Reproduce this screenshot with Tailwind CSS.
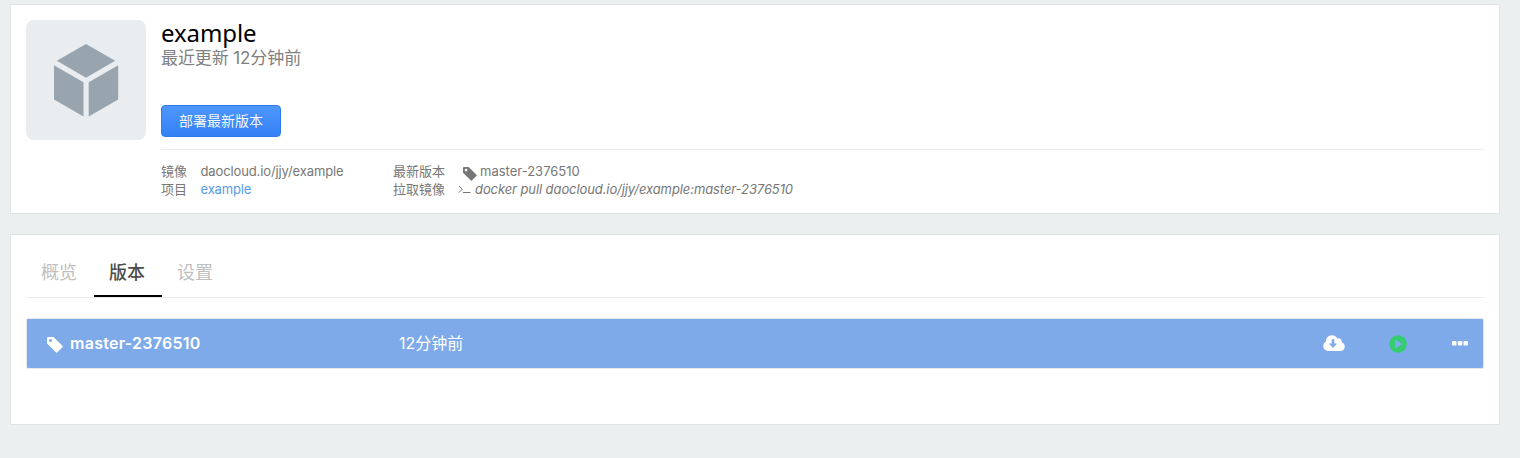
<!DOCTYPE html>
<html lang="zh-CN">
<head>
<meta charset="utf-8">
<title>example</title>
<script src="https://cdn.jsdelivr.net/npm/@tailwindcss/browser@4"></script>
</head>
<body class="h-[458px] overflow-hidden bg-[#ebeff0] pt-1 pl-2.5 font-['Inter','Noto_Sans_CJK_SC',sans-serif] text-[#777]">
  <section class="flex h-[210px] w-[1490px] gap-[15px] border border-[#e1e4e5] bg-white p-[15px]">
    <div class="flex size-[120px] shrink-0 items-center justify-center rounded-lg bg-[#e9edf0]">
      <svg class="h-[73px] w-[65px]" viewBox="0 0 65 73" fill="#99a5ae">
        <path d="M32 0 61.2 16.8 32 33.7 2.8 16.8ZM0 21.2 29.5 38.2V72.5L0 55.5ZM64.2 21.2V55.5L34.7 72.5V38.2Z"/>
      </svg>
    </div>
    <div class="flex min-w-0 flex-1 flex-col">
      <h1 class="h-[27px] font-['Noto_Sans','Open_Sans',sans-serif] text-[24px] leading-[26px] tracking-[-0.1px] whitespace-nowrap text-black">example</h1>
      <p class="h-[22px] text-[17px] leading-[22px] whitespace-nowrap text-[#808080]"><span class="tracking-[-0.1px]">最近更新 12分钟前</span></p>
      <button class="mt-[36px] h-8 w-[120px] rounded border border-[#2f7bea] bg-linear-to-b from-[#4f97ff] to-[#3381f4] text-[14px] leading-[30px] text-white/95">部署最新版本</button>
      <div class="mt-3 border-t border-[#ebebeb] pt-3 text-[13px] leading-[18px] whitespace-nowrap">
        <div class="flex h-[18px]">
          <span class="w-[39px]">镜像</span>
          <span class="w-[193px] pl-[0.5px] tracking-[-0.12px]">daocloud.io/jjy/example</span>
          <span class="w-[70px]">最新版本</span>
          <svg class="mt-[5px] mr-[3px] size-[14px]" viewBox="0 0 16 16" fill="#777"><path fill-rule="evenodd" d="M0 1.2Q0 0 1.2 0H6.5L15.6 9.1Q16 9.5 15.6 9.9L10.1 15.5Q9.6 16 9.1 15.5L0 6.6ZM3.5 2A1.5 1.5 0 1 0 3.5 5 1.5 1.5 0 1 0 3.5 2Z"/></svg>
          <span>master-2376510</span>
        </div>
        <div class="flex h-[18px]">
          <span class="w-[39px]">项目</span>
          <a class="w-[193px] pl-[0.5px] tracking-[-0.15px] text-[#599be8]">example</a>
          <span class="w-[65px]">拉取镜像</span>
          <svg class="mt-[4px] mr-1 h-[11px] w-[13px]" viewBox="0 0 13 11" fill="none" stroke="#777"><path d="M1 2 4.3 5.2 1 8.5M5 8.5H12.5"/></svg>
          <em class="tracking-[-0.09px]">docker pull daocloud.io/jjy/example:master-2376510</em>
        </div>
      </div>
    </div>
  </section>

  <section class="mt-5 h-[191px] w-[1490px] border border-[#e1e4e5] bg-white px-[15px] pt-[15px]">
    <nav class="flex h-[48px] border-b border-[#ebebeb] text-[18px] leading-[46px] text-[#bfbfbf]">
      <a class="w-[68px] pl-[15px]">概览</a>
      <a class="h-[47px] w-[68px] border-b-2 border-black pl-[15px] font-medium text-[#4d4d4d]">版本</a>
      <a class="w-[68px] pl-[15px]">设置</a>
    </nav>
    <div class="mt-5 flex h-[51px] items-center rounded-xs border border-[#e6e8eb] bg-[#7eaae9] text-[16px] leading-6 whitespace-nowrap text-white">
      <svg class="mt-[2px] ml-[20px] size-4 shrink-0" viewBox="0 0 16 16" fill="#fff"><path fill-rule="evenodd" d="M0 .8Q0 0 .8 0H6.5L15.7 9.1Q16 9.5 15.7 9.9L10.1 15.6Q9.6 16 9.1 15.6L0 6.6ZM3.5 2A1.5 1.5 0 1 0 3.5 5 1.5 1.5 0 1 0 3.5 2Z"/></svg>
      <strong class="mb-0.5 ml-[7px] w-[329px] font-semibold tracking-[0.27px]">master-2376510</strong>
      <span class="mb-0.5">12分钟前</span>
      <svg class="mb-px ml-auto h-4 w-[22px]" viewBox="0 0 22 16"><path fill="#fff" d="M5 16A5 5 0 0 1 2.9 6.6 6 6 0 0 1 14.2 3.6 3.2 3.2 0 0 1 18.6 7.4 4.4 4.4 0 0 1 17.4 16Z"/><path fill="#7eaae9" d="M8.7 4.3H11.3V8.6H14.2L10 12.9 5.8 8.6H8.7Z"/></svg>
      <svg class="mt-px ml-[44px] size-[18px]" viewBox="0 0 18 18"><circle cx="9" cy="9" r="8.8" fill="#36cc71"/><path fill="#7eaae9" d="M6 4.5 13.8 9 6 13.5Z"/></svg>
      <svg class="mr-[15px] ml-[45px] h-[5px] w-4" viewBox="0 0 16 5" fill="#fff"><rect width="4.5" height="4.5" rx="1"/><rect x="5.8" width="4.5" height="4.5" rx="1"/><rect x="11.5" width="4.5" height="4.5" rx="1"/></svg>
    </div>
  </section>
</body>
</html>
